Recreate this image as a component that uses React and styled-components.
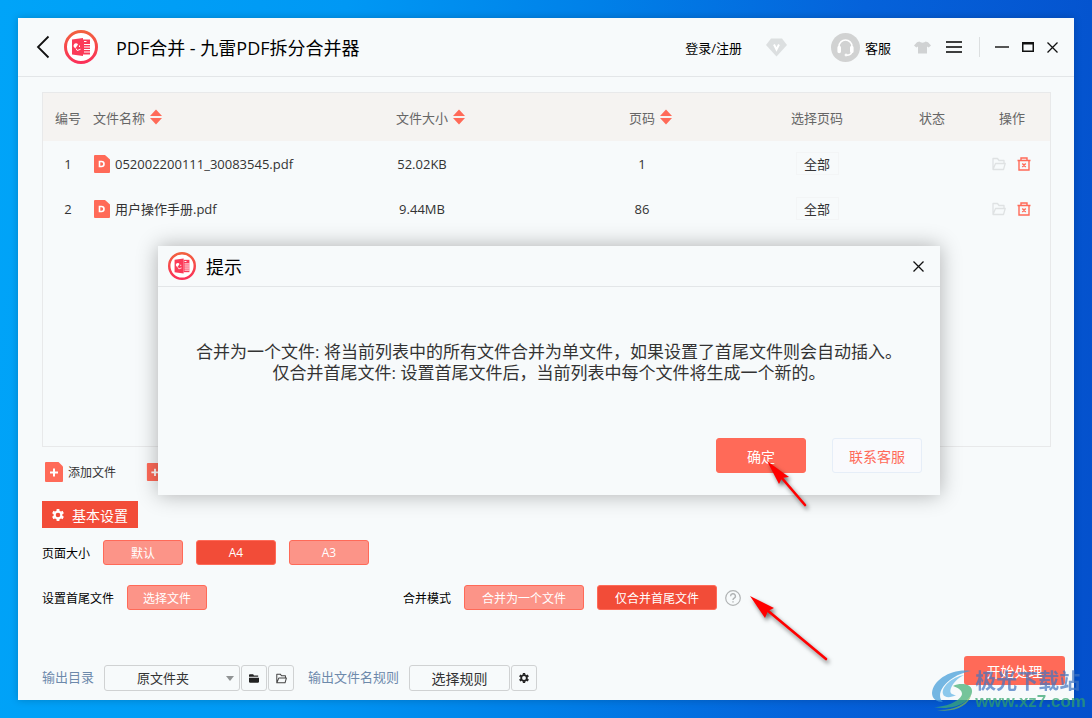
import { useState } from "react"
import styled, { createGlobalStyle } from "styled-components"

const GlobalStyle = createGlobalStyle`
    * {
        box-sizing: border-box;
    }
    body {
        margin: 0;
        font-family: "Open Sans", "Noto Sans CJK SC", sans-serif;
        font-size: 13px;
        color: #333;
    }
    button, select {
        font: inherit;
        color: inherit;
        margin: 0;
        padding: 0;
        border: 0;
        background: none;
        cursor: pointer;
    }
    svg {
        display: block;
        flex: none;
    }
`
const Desktop = styled.div`
    position: relative;
    display: flex;
    min-height: 100vh;
    padding: 18px;
    overflow: hidden;
    background: linear-gradient(95deg, #00a4f8 0%, #0098f4 30%, #0080e8 52%, #0562da 75%, #0450cc 100%);
`
const Window = styled.div`
    flex: 1;
    min-width: 0;
    display: flex;
    flex-direction: column;
    background-color: #f7fafb;
    box-shadow: 0 0 8px rgba(0, 0, 0, 0.2);
`
const Header = styled.header`
    display: flex;
    align-items: center;
    height: 59px;
    padding: 0 16px 0 18px;
    border-bottom: 1px solid #e3e6e8;
    color: #000;
`
const Title = styled.h1`
    flex: 1;
    margin: 0 0 0 18px;
    font-size: 18px;
    font-weight: 400;
`
const BackButton = styled.button`
    margin-right: 14px;
`
const HeaderGroup = styled.div`
    display: flex;
    align-items: center;
    gap: ${(props) => props.$gap}px;
`
const Login = styled.a`
    color: #000;
    text-decoration: none;
    margin-right: 24px;
`
const Service = styled.button`
    display: flex;
    align-items: center;
    gap: 5px;
    margin: 0 23px 0 44px;
`
const ServiceIcon = styled.span`
    display: flex;
    align-items: center;
    justify-content: center;
    height: 29px;
    width: 29px;
    border-radius: 50%;
    background-color: #d1d2d2;
`
const Divider = styled.span`
    height: 20px;
    width: 1px;
    margin: 0 15px 0 17px;
    background-color: #dcdfe0;
`
const Content = styled.main`
    flex: 1;
    display: flex;
    flex-direction: column;
    padding: 15px 23px 0 24px;
`
const TablePanel = styled.div`
    flex: 1;
    border: 1px solid #e8e9ea;
`
const Table = styled.table`
    width: 100%;
    table-layout: fixed;
    border-collapse: collapse;
`
const Col = styled.col`
    width: ${(props) => props.$width};
`
const Th = styled.th`
    height: 48px;
    padding: 0;
    background-color: #f5f3f1;
    color: #666;
    font-weight: 400;
    text-align: ${(props) => props.$align || "center"};
`
const Td = styled.td`
    height: 45px;
    padding: 0;
    text-align: ${(props) => props.$align || "center"};
`
const SortButton = styled.button`
    display: inline-flex;
    align-items: center;
    gap: 5px;
    margin-right: -17px;
`
const FileName = styled.span`
    display: flex;
    align-items: center;
    gap: 5px;
    padding-left: 1px;
    white-space: nowrap;
`
const AllButton = styled.button`
    height: 23px;
    width: 43px;
    border: 1px solid #f3f5f6;
`
const Actions = styled.div`
    display: flex;
    justify-content: center;
    gap: 11px;
    padding-right: 2px;
`
const AddBar = styled.div`
    display: flex;
    align-items: center;
    gap: 30px;
    height: 50px;
    margin: 0 0 4px 3px;
`
const AddButton = styled.button`
    display: flex;
    align-items: center;
    gap: 5px;
    font-size: 12px;
`
const SettingsTab = styled.button`
    align-self: flex-start;
    display: flex;
    align-items: center;
    justify-content: center;
    gap: 8px;
    height: 27px;
    width: 96px;
    background-color: #f24c38;
    color: #fff;
    font-size: 14px;
`
const SettingsRow = styled.div`
    display: grid;
    grid-template-columns: 361px 1fr;
    margin-top: ${(props) => props.$top}px;
`
const Field = styled.div`
    display: flex;
    align-items: center;
    gap: 13px;
    font-size: 12px;
    color: #000;
    white-space: nowrap;
`
const Option = styled.button`
    height: 25px;
    width: ${(props) => (props.$wide ? "120px" : "80px")};
    border: 1px solid #ff6a58;
    border-radius: 3px;
    background-color: ${(props) => (props.$active ? "#f24c38" : "#fc9488")};
    color: #fff;
`
const Anchor = styled.span`
    position: relative;
    display: flex;
`
const HelpButton = styled.button`
    height: 16px;
    width: 16px;
    margin-left: -5px;
`
const Footer = styled.footer`
    display: flex;
    align-items: flex-end;
    height: 35px;
    margin: 46px 9px 9px 24px;
`
const FooterLabel = styled.label`
    line-height: 28px;
    color: #6d89ab;
    margin-right: 10px;
`
const SelectWrap = styled.div`
    position: relative;
    width: 136px;

    svg {
        position: absolute;
        right: 6px;
        top: 11px;
        pointer-events: none;
    }
`
const Select = styled.select`
    appearance: none;
    height: 26px;
    width: 100%;
    padding-right: 18px;
    border: 1px solid #d0d2d3;
    border-radius: 3px;
    text-align: center;
    text-align-last: center;
`
const FooterButton = styled.button`
    display: flex;
    align-items: center;
    justify-content: center;
    height: 26px;
    width: ${(props) => (props.$wide ? "101px" : "26px")};
    margin-left: ${(props) => (props.$wide ? "0" : "1px")};
    margin-right: ${(props) => (props.$last ? "14px" : "0")};
    border: 1px solid #d0d2d3;
    border-radius: 3px;
    font-size: 14px;
`
const StartButton = styled.button`
    align-self: flex-start;
    height: 29px;
    width: 101px;
    margin-left: auto;
    border-radius: 3px;
    background-color: #ff6a58;
    color: #fff;
    font-size: 14px;
`
const Overlay = styled.div`
    position: absolute;
    inset: 0;
    display: flex;
    align-items: center;
    justify-content: center;
    padding: 23px 0 0 6px;
    pointer-events: none;
`
const Dialog = styled.section`
    width: 782px;
    background-color: #f7fafb;
    box-shadow: 0 0 20px rgba(0, 0, 0, 0.3);
    pointer-events: auto;
`
const DialogHeader = styled.div`
    display: flex;
    align-items: center;
    gap: 10px;
    height: 41px;
    padding: 0 16px 0 10px;
    border-bottom: 1px solid #e3e6e8;
    color: #000;
`
const DialogTitle = styled.h2`
    flex: 1;
    margin: 0;
    font-size: 18px;
    font-weight: 400;
`
const Message = styled.p`
    margin: 0;
    padding: 54px 0 55px;
    font-size: 17px;
    line-height: 21px;
    text-align: center;
`
const DialogActions = styled.div`
    display: flex;
    justify-content: flex-end;
    gap: 26px;
    padding: 0 18px 22px;
`
const DialogButton = styled.button`
    height: 35px;
    width: 90px;
    border: 1px solid ${(props) => (props.$primary ? "#ff6a58" : "#e6eef8")};
    border-radius: 3px;
    background-color: ${(props) => (props.$primary ? "#ff6a58" : "#f9fafd")};
    color: ${(props) => (props.$primary ? "#fff" : "#ff6a58")};
    font-size: 14px;
`
const ArrowSvg = styled.svg`
    position: absolute;
    left: ${(props) => props.$left}px;
    top: ${(props) => props.$top}px;
    overflow: visible;
    pointer-events: none;
    filter: drop-shadow(2px 3px 2px rgba(0, 0, 0, 0.55));
`
const Watermark = styled.div`
    position: absolute;
    right: 6px;
    bottom: 6px;
    display: flex;
    align-items: center;
    opacity: 0.7;
    font-weight: 700;
    white-space: nowrap;
    pointer-events: none;
`
const SiteName = styled.div`
    font-size: 21px;
    line-height: 24px;
    color: #3f74c0;
`
const SiteUrl = styled.div`
    font-family: "Liberation Sans", sans-serif;
    font-size: 17px;
    line-height: 20px;
    color: #2fa36b;
`

const Logo = ({ size, id }) => (
    <svg width={size} height={size} viewBox="0 0 34 34">
        <defs>
            <linearGradient id={id} x1="0" y1="0" x2="0" y2="1">
                <stop offset="0" stopColor="#f2603f" />
                <stop offset="1" stopColor="#fb3058" />
            </linearGradient>
        </defs>
        <circle cx="17" cy="17" r="15.5" fill="#fff" stroke={`url(#${id})`} strokeWidth="3" />
        <path d="M19 9.500h7v15h-7z" fill="#fb3a58" />
        <path d="M20 11.500h2.500M20 14.500h6M20 17h6M20 19.500h6M20 22h6" stroke="#fff" strokeWidth="1.200" />
        <path d="M8 9.500 19 8v18L8 24.500z" fill="#fb3a58" />
        <path d="M14 14.500a2.400 2.400 0 1 0-2.400 3.600z" fill="#fff" />
        <path d="M12 18.500l1.200 2 3.300-1.200M15.500 15.500v1.500" stroke="#fff" strokeWidth="1" fill="none" />
    </svg>
)
const SortIcon = () => (
    <svg width="12" height="16" viewBox="0 0 12 16" fill="#ff6a58">
        <path d="M6 0.500 12 7H0zM0 9h12L6 15.500z" />
    </svg>
)
const PdfIcon = () => (
    <svg width="16" height="18" viewBox="0 0 16 18">
        <path d="M1 0h10l5 4.500V17a1 1 0 0 1-1 1H1a1 1 0 0 1-1-1V1a1 1 0 0 1 1-1z" fill="#ff6a58" />
        <path d="M5.500 6.500h2a2.500 2.500 0 0 1 0 5h-2z" fill="none" stroke="#fff" strokeWidth="1.600" />
    </svg>
)
const AddIcon = ({ width, height }) => (
    <svg width={width} height={height} viewBox="0 0 18 20">
        <path d="M1 0h12.500L18 4.500V19a1 1 0 0 1-1 1H1a1 1 0 0 1-1-1V1a1 1 0 0 1 1-1z" fill="#ff6a58" />
        <path d="M9 6.500v8M5 10.500h8" stroke="#fff" strokeWidth="2" />
    </svg>
)
const FolderIcon = ({ color, size }) => (
    <svg width={size} height={size} viewBox="0 0 14 14" fill="none" stroke={color} strokeWidth="1.300">
        <path d="M1 12.500V1.500h4.500L7 3.500h5v2.500M1 12.500h10.500L13.200 6.500H3.500z" strokeLinejoin="round" />
    </svg>
)
const TrashIcon = () => (
    <svg width="14" height="14" viewBox="0 0 14 14" fill="none" stroke="#ff6a58" strokeWidth="1.400">
        <path d="M0.500 3.500h13M2 3.500v9.500h10V3.500M4 3V1h6v2M5.300 6.500l3.400 3.500M8.700 6.500 5.300 10" />
    </svg>
)
const GearIcon = ({ color, size }) => (
    <svg width={size} height={size} viewBox="0 0 12 12">
        <circle cx="6" cy="6" r="3.400" fill="none" stroke={color} strokeWidth="2.200" />
        <path d="M6 0v2M6 10v2M0.800 3l1.700 1M9.500 8l1.700 1M11.200 3l-1.700 1M2.500 8l-1.700 1" stroke={color} strokeWidth="2.800" />
    </svg>
)
const CloseIcon = () => (
    <svg width="11" height="11" viewBox="0 0 11 11" stroke="#111" strokeWidth="1.300">
        <path d="M0.500 0.500l10 10M10.500 0.500l-10 10" />
    </svg>
)
const Arrow = ({ left, top, head, line }) => (
    <ArrowSvg $left={left} $top={top} width="1" height="1">
        <polygon points={head} fill="#f00" />
        <path d={line} stroke="#f00" strokeWidth="2.600" strokeLinecap="round" />
    </ArrowSvg>
)

const files = [
    { id: 1, name: "052002200111_30083545.pdf", size: "52.02KB", pages: 1 },
    { id: 2, name: "用户操作手册.pdf", size: "9.44MB", pages: 86 },
]
const pageSizes = ["默认", "A4", "A3"]
const mergeModes = ["合并为一个文件", "仅合并首尾文件"]

const App = () => {
    const [pageSize, setPageSize] = useState("A4")
    const [mode, setMode] = useState("仅合并首尾文件")
    const [open, setOpen] = useState(true)

    return (
        <Desktop>
            <GlobalStyle />
            <Window>
                <Header>
                    <BackButton aria-label="返回">
                        <svg width="14" height="24" viewBox="0 0 14 24" fill="none" stroke="#111" strokeWidth="1.800">
                            <path d="M12.500 1.500 2 12l10.500 10.500" />
                        </svg>
                    </BackButton>
                    <Logo size={34} id="logo-main" />
                    <Title>PDF合并 - 九雷PDF拆分合并器</Title>
                    <Login href="#">登录/注册</Login>
                    <button aria-label="VIP">
                        <svg width="21" height="19" viewBox="0 0 21 19">
                            <path d="M5 0.500h11L21 7 10.500 18.500 0 7z" fill="#dcdfe0" />
                            <path d="M8 6.500l2.500 5 2.500-5" fill="none" stroke="#fff" strokeWidth="2" />
                        </svg>
                    </button>
                    <Service>
                        <ServiceIcon>
                            <svg width="19" height="19" viewBox="0 0 19 19" fill="none" stroke="#fff">
                                <path d="M3 9.500V8.500a6.500 6.500 0 0 1 13 0v1" strokeWidth="1.500" />
                                <path d="M3.200 9.500v4M15.800 9.500v4" strokeWidth="3.600" strokeLinecap="round" />
                                <path d="M15.800 14c-.5 2-2.300 3.200-5 3.200" strokeWidth="1.400" />
                                <circle cx="10" cy="17" r="1" fill="#fff" />
                            </svg>
                        </ServiceIcon>
                        客服
                    </Service>
                    <HeaderGroup $gap={15}>
                        <button aria-label="皮肤">
                            <svg width="17" height="13" viewBox="0 0 17 13">
                                <path d="M5.500 0.500c1 1.500 5 1.500 6 0L14 1.200 17 4.500l-2.300 2L13 5.500V12.500H4V5.500L2.300 6.500 0 4.500 3 1.200z" fill="#d0d2d3" />
                            </svg>
                        </button>
                        <button aria-label="菜单">
                            <svg width="16" height="12" viewBox="0 0 16 12" stroke="#000" strokeWidth="1.500">
                                <path d="M0 1h16M0 6h16M0 11h16" />
                            </svg>
                        </button>
                    </HeaderGroup>
                    <Divider />
                    <HeaderGroup $gap={13}>
                        <button aria-label="最小化">
                            <svg width="14" height="12" viewBox="0 0 14 12">
                                <path d="M0 5h14v2H0z" fill="#555" />
                            </svg>
                        </button>
                        <button aria-label="最大化">
                            <svg width="12" height="10" viewBox="0 0 12 10">
                                <path d="M0 0h12v10H0zM1.500 2.500v6h9v-6z" fill="#111" fillRule="evenodd" />
                            </svg>
                        </button>
                        <button aria-label="关闭">
                            <CloseIcon />
                        </button>
                    </HeaderGroup>
                </Header>

                <Content>
                    <TablePanel>
                        <Table>
                            <colgroup>
                                <Col $width="50px" />
                                <Col $width="auto" />
                                <Col $width="236px" />
                                <Col $width="204px" />
                                <Col $width="146px" />
                                <Col $width="84px" />
                                <Col $width="76px" />
                            </colgroup>
                            <thead>
                                <tr>
                                    <Th>编号</Th>
                                    <Th $align="left"><SortButton>文件名称<SortIcon /></SortButton></Th>
                                    <Th><SortButton>文件大小<SortIcon /></SortButton></Th>
                                    <Th><SortButton>页码<SortIcon /></SortButton></Th>
                                    <Th>选择页码</Th>
                                    <Th>状态</Th>
                                    <Th>操作</Th>
                                </tr>
                            </thead>
                            <tbody>
                                {files.map((file) => (
                                    <tr key={file.id}>
                                        <Td>{file.id}</Td>
                                        <Td $align="left"><FileName><PdfIcon />{file.name}</FileName></Td>
                                        <Td>{file.size}</Td>
                                        <Td>{file.pages}</Td>
                                        <Td><AllButton>全部</AllButton></Td>
                                        <Td />
                                        <Td>
                                            <Actions>
                                                <button aria-label="打开"><FolderIcon color="#dfe2e3" size={14} /></button>
                                                <button aria-label="删除"><TrashIcon /></button>
                                            </Actions>
                                        </Td>
                                    </tr>
                                ))}
                            </tbody>
                        </Table>
                    </TablePanel>
                    <AddBar>
                        <AddButton><AddIcon width={18} height={20} />添加文件</AddButton>
                        <AddButton aria-label="添加文件夹"><AddIcon width={18} height={18} /></AddButton>
                    </AddBar>
                    <SettingsTab><GearIcon color="#fff" size={12} />基本设置</SettingsTab>
                    <SettingsRow $top={12}>
                        <Field role="group" aria-label="页面大小">
                            页面大小
                            {pageSizes.map((item) => (
                                <Option key={item} $active={item === pageSize} aria-pressed={item === pageSize} onClick={() => setPageSize(item)}>
                                    {item}
                                </Option>
                            ))}
                        </Field>
                    </SettingsRow>
                    <SettingsRow $top={20}>
                        <Field>
                            设置首尾文件
                            <Option>选择文件</Option>
                        </Field>
                        <Field role="group" aria-label="合并模式">
                            合并模式
                            {mergeModes.map((item) => (
                                <Option key={item} $wide $active={item === mode} aria-pressed={item === mode} onClick={() => setMode(item)}>
                                    {item}
                                </Option>
                            ))}
                            <Anchor>
                                <HelpButton aria-label="帮助" onClick={() => setOpen(true)}>
                                    <svg width="16" height="16" viewBox="0 0 16 16" fill="none" stroke="#b0b3b4">
                                        <circle cx="8" cy="8" r="7.300" strokeWidth="1.200" />
                                        <path d="M5.600 6.200a2.400 2.400 0 1 1 3.600 2c-.8.500-1.200.9-1.200 1.800M8 11.200v1.400" strokeWidth="1.400" />
                                    </svg>
                                </HelpButton>
                                <Arrow left={20} top={6} head="0,0 24,12 18,15 15,22" line="M17 14 76 63" />
                            </Anchor>
                        </Field>
                    </SettingsRow>
                </Content>

                <Footer>
                    <FooterLabel htmlFor="folder">输出目录</FooterLabel>
                    <SelectWrap>
                        <Select id="folder">
                            <option>原文件夹</option>
                        </Select>
                        <svg width="8" height="5" viewBox="0 0 8 5">
                            <path d="M0 0h8L4 5z" fill="#909394" />
                        </svg>
                    </SelectWrap>
                    <FooterButton aria-label="选择目录">
                        <svg width="10" height="9" viewBox="0 0 12 10" fill="#222">
                            <path d="M1 0h4l1 1.500h5V3H0V1a1 1 0 0 1 1-1zM0 4h12v5a1 1 0 0 1-1 1H1a1 1 0 0 1-1-1z" />
                        </svg>
                    </FooterButton>
                    <FooterButton $last aria-label="打开目录"><FolderIcon color="#444" size={11} /></FooterButton>
                    <FooterLabel htmlFor="rule">输出文件名规则</FooterLabel>
                    <FooterButton id="rule" $wide>选择规则</FooterButton>
                    <FooterButton aria-label="规则设置"><GearIcon color="#222" size={10} /></FooterButton>
                    <StartButton>开始处理</StartButton>
                </Footer>
            </Window>

            {open && (
                <Overlay>
                    <Dialog role="dialog" aria-labelledby="dialog-title">
                        <DialogHeader>
                            <Logo size={28} id="logo-dialog" />
                            <DialogTitle id="dialog-title">提示</DialogTitle>
                            <button aria-label="关闭" onClick={() => setOpen(false)}><CloseIcon /></button>
                        </DialogHeader>
                        <Message>
                            合并为一个文件: 将当前列表中的所有文件合并为单文件，如果设置了首尾文件则会自动插入。
                            <br />
                            仅合并首尾文件: 设置首尾文件后，当前列表中每个文件将生成一个新的。
                        </Message>
                        <DialogActions>
                            <Anchor>
                                <DialogButton $primary onClick={() => setOpen(false)}>确定</DialogButton>
                                <Arrow left={51} top={23} head="0,0 22,16 15,17 12,23" line="M14 16 38 44" />
                            </Anchor>
                            <DialogButton>联系客服</DialogButton>
                        </DialogActions>
                    </Dialog>
                </Overlay>
            )}

            <Watermark>
                <svg width="44" height="42" viewBox="0 0 44 42">
                    <path d="M40 2C22-1 2 10 1 24c0 6 5 9 11 9C6 28 9 17 22 9c6-4 12-6 18-7z" fill="#3e9ad8" />
                    <path d="M33 6C21 8 10 18 12 25c1 4 8 4 13 1-4 0-7-2-5-7 2-5 7-10 13-13z" fill="#5fb4e6" />
                    <path d="M22 17c8-4 20-2 19 6C40 33 22 42 3 38c14 0 27-7 28-13 0-4-4-6-9-8z" fill="#3fae72" />
                    <path d="M6 41c15 1 29-5 34-15-2 10-16 18-34 15z" fill="#7dbb4a" />
                </svg>
                <div>
                    <SiteName>极光下载站</SiteName>
                    <SiteUrl>www.xz7.com</SiteUrl>
                </div>
            </Watermark>
        </Desktop>
    )
}

export default App
